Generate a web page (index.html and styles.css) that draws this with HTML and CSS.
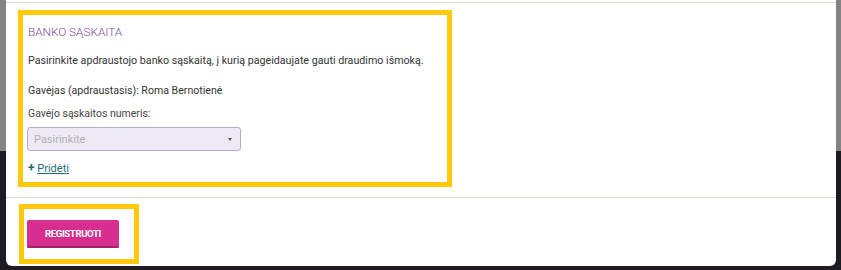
FILE: index.html
```html
<!DOCTYPE html>
<html lang="lt">
<head>
  <meta charset="UTF-8">
  <title>Banko sąskaita</title>
  <link rel="stylesheet" href="styles.css">
</head>
<body>

<div class="modal">
  <div class="modal-top"></div>

  <!-- Bank account block -->
  <div class="modal-body">
    <div class="highlight bank">
      <h4 class="bank-title">Banko sąskaita</h4>
      <p class="bank-intro">Pasirinkite apdraustojo banko sąskaitą, į kurią pageidaujate gauti draudimo išmoką.</p>
      <p class="bank-owner">Gavėjas (apdraustasis): Roma Bernotienė</p>
      <label class="bank-label">Gavėjo sąskaitos numeris:</label>
      <div class="select">
        <span class="select-text">Pasirinkite</span>
        <span class="select-arrow"></span>
      </div>
      <a class="add-link" href="#"><span class="plus">+</span> <u>Pridėti</u></a>
    </div>
  </div>

  <!-- Footer -->
  <div class="modal-footer">
    <div class="highlight btn-wrap">
      <button class="btn-primary">Registruoti</button>
    </div>
  </div>
</div>

</body>
</html>
```

FILE: styles.css
```css
body {
  margin: 0;
  padding: 0;
  height: 270px;
  overflow: hidden;
  font-family: Roboto, "Liberation Sans", sans-serif;
  background: linear-gradient(to bottom, #838383 0, #838383 151px, #1e1c22 151px);
}
.modal {
  margin: 0 5px 0 6px;
  height: 266px;
  background: #fff;
  border-radius: 0 0 6px 6px;
  display: flex;
  flex-direction: column;
}
.modal-top {
  height: 2px;
  border-bottom: 1px solid #dcdad0;
}
.modal-body {
  padding: 7px 0 10px 12px;
  border-bottom: 1px solid #dcdad0;
}
.highlight {
  border: 5px solid #fec80b;
}
.bank {
  width: 419px;
  height: 156px;
  padding: 11px 0 0 5px;
  color: #333;
  font-size: 10.7px;
  line-height: 13px;
}
.bank-title {
  margin: 0;
  font-weight: 300;
  font-size: 11.8px;
  color: #7a4c95;
  text-transform: uppercase;
}
.bank-intro {
  margin: 15px 0 0;
}
.bank-owner {
  margin: 17px 0 0;
  font-size: 10.6px;
}
.bank-label {
  display: block;
  margin-top: 10px;
  color: #444;
  font-size: 10.5px;
}
.select {
  margin: 7px 0 0 -1px;
  width: 214px;
  height: 24px;
  border: 1px solid #b4a9d6;
  border-radius: 3px;
  background: #ece9f5;
  display: flex;
  align-items: center;
  justify-content: space-between;
  padding: 0 8px 0 6px;
  box-sizing: border-box;
}
.select-text {
  color: #b3b1b8;
  font-size: 11px;
}
.select-arrow {
  width: 0;
  height: 0;
  border-left: 2px solid transparent;
  border-right: 2px solid transparent;
  border-top: 3px solid #555;
}
.add-link {
  display: inline-block;
  margin-top: 11px;
  color: #1d6d77;
  font-size: 11px;
  text-decoration: none;
}
.add-link .plus {
  font-weight: bold;
  font-size: 12px;
}
.modal-footer {
  padding: 6px 0 0 13px;
}
.btn-wrap {
  width: 107px;
  height: 44px;
  padding: 6px 0 0 3px;
}
.btn-primary {
  margin-top: 5px;
  width: 92px;
  height: 28px;
  border: none;
  border-radius: 2px;
  background: #d62f8f;
  box-shadow: inset 0 -2px 0 #a3206c;
  color: #fff;
  font-family: Roboto, "Liberation Sans", sans-serif;
  font-weight: bold;
  font-size: 9.6px;
  letter-spacing: -0.4px;
  text-transform: uppercase;
  padding: 0 0 1px;
  cursor: pointer;
}
```
